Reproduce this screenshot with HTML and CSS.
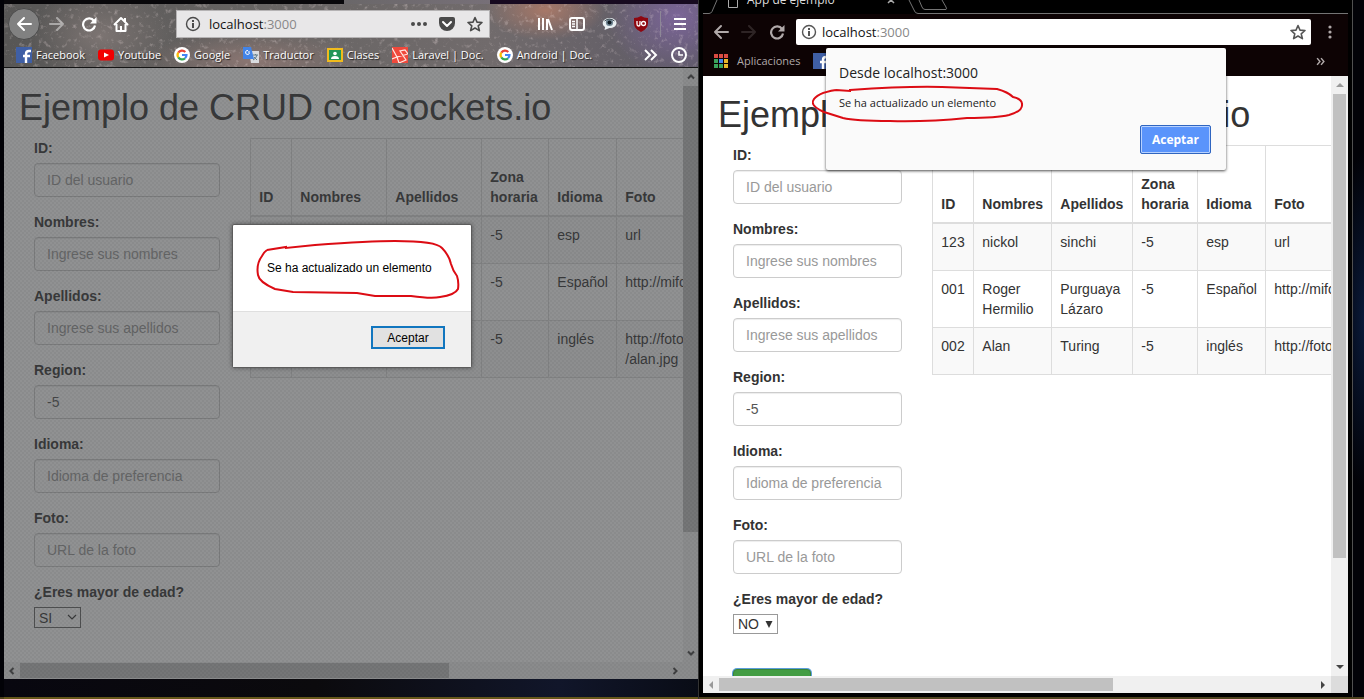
FILE: index.html
```html
<!DOCTYPE html>
<html lang="es">
<head>
<meta charset="utf-8">
<title>App de ejemplo</title>
<link rel="stylesheet" href="styles.css">
</head>
<body>
<svg class="defs" aria-hidden="true">
  <symbol id="back" viewBox="0 0 16 16"><path d="M15 8H2M8 2L2 8l6 6" fill="none" stroke="currentColor" stroke-width="2" stroke-linecap="round" stroke-linejoin="round"/></symbol>
  <symbol id="forward" viewBox="0 0 16 16"><path d="M1 8h13M8 2l6 6-6 6" fill="none" stroke="currentColor" stroke-width="2" stroke-linecap="round" stroke-linejoin="round"/></symbol>
  <symbol id="reload" viewBox="0 0 16 16"><path d="M13 5a6 6 0 1 0 1 4.500" fill="none" stroke="currentColor" stroke-width="2.200"/><path d="M15.500 1v6.500H9z" fill="currentColor"/></symbol>
  <symbol id="info" viewBox="0 0 16 16"><circle cx="8" cy="8" r="6.500" fill="none" stroke="currentColor" stroke-width="1.400"/><path d="M7 7h2v5H7zM7 4h2v2H7z" fill="currentColor"/></symbol>
  <symbol id="star" viewBox="0 0 16 16"><path d="M8 1.500l2 4.600 5 .4-3.800 3.300L12.400 14.600 8 12l-4.400 2.600 1.200-4.800L1 6.500l5-.4z" fill="none" stroke="currentColor" stroke-width="1.600" stroke-linejoin="round"/></symbol>
  <symbol id="google" viewBox="0 0 16 16"><circle cx="8" cy="8" r="8" fill="#fff"/><g fill="none" stroke-width="2.200"><path d="M4.300 5.600A4.500 4.500 0 0 1 11.300 4.900" stroke="#ea4335"/><path d="M4.300 5.600a4.500 4.500 0 0 0 0 4.800" stroke="#fbbc05"/><path d="M4.300 10.400a4.500 4.500 0 0 0 6.700.9" stroke="#34a853"/><path d="M8 8h4.500a4.500 4.500 0 0 1-1.500 3.300" stroke="#4285f4"/></g></symbol>
  <symbol id="facebook" viewBox="0 0 16 16"><path d="M0 0h16v16H0z" fill="#3f5fa5"/><path d="M10 16V7q0-3 3-3h2M7 9h7" fill="none" stroke="#fff" stroke-width="2.400"/></symbol>
  <symbol id="chev" viewBox="0 0 8 8"><path d="M1 5.500l3-3 3 3" fill="none" stroke="currentColor" stroke-width="2"/></symbol>
  <symbol id="tri" viewBox="0 0 8 8"><path d="M0 6l4-4 4 4z" fill="currentColor"/></symbol>
</svg>

<main class="desktop">
  <section class="window firefox">
    <div class="ff-top"></div>
    <header class="ff-chrome">
      <svg class="stars" viewBox="0 0 694 63" preserveAspectRatio="none" aria-hidden="true">
        <filter id="dust"><feTurbulence type="fractalNoise" baseFrequency="0.2" numOctaves="4" seed="8"/><feColorMatrix values="0 0 0 0 .9  0 0 0 0 .78  0 0 0 0 .78  2 2 0 0 -2.200"/></filter>
        <rect width="694" height="63" filter="url(#dust)" opacity=".35"/>
      </svg>
      <div class="ff-nav">
        <button class="ff-back" type="button"><svg class="i16"><use href="#back"/></svg></button>
        <button class="ff-btn faded" type="button"><svg class="i16"><use href="#forward"/></svg></button>
        <button class="ff-btn" type="button"><svg class="i16"><use href="#reload"/></svg></button>
        <button class="ff-btn" type="button"><svg class="i16" viewBox="0 0 16 16"><path d="M1 9l7-7 7 7M3.500 8v7h9V8" fill="none" stroke="currentColor" stroke-width="2" stroke-linejoin="round"/><path d="M7 10h2v5H7zM11 2h2v4h-2z" fill="currentColor"/></svg></button>
        <div class="ff-url">
          <svg class="i16"><use href="#info"/></svg>
          <span class="address">localhost<span class="port">:3000</span></span>
          <svg class="i16" viewBox="0 0 16 16"><g fill="currentColor"><circle cx="2" cy="8" r="2"/><circle cx="8" cy="8" r="2"/><circle cx="14" cy="8" r="2"/></g></svg>
          <svg class="i16" viewBox="0 0 16 16"><path d="M2 1h12q2 0 2 2v4a8 8 0 0 1-16 0V3q0-2 2-2z" fill="currentColor"/><path d="M4 6l4 4 4-4" fill="none" stroke="#fff" stroke-width="2" stroke-linecap="round" stroke-linejoin="round"/></svg>
          <svg class="i16"><use href="#star"/></svg>
        </div>
        <div class="ff-tools">
          <svg class="i16" viewBox="0 0 16 16"><path d="M2 2v12M6 2v12M10 3v11M11 3l4 11" fill="none" stroke="currentColor" stroke-width="2"/></svg>
          <svg class="i16" viewBox="0 0 16 16"><rect x="1" y="2" width="14" height="12" rx="2" fill="none" stroke="currentColor" stroke-width="2"/><path d="M8 2v12M3 5.500h3M3 8h3M3 10.500h3" fill="none" stroke="currentColor" stroke-width="1.500"/></svg>
          <svg class="i16" viewBox="0 0 16 16"><path d="M8.500 2c4 0 7 2 7 5s-3 5-7 5l-5 2 .6-3C0 9 1 2 8.500 2z" fill="#e9eff2"/><circle cx="8.500" cy="6.500" r="3.600" fill="#6f8492"/><circle cx="8.500" cy="6.500" r="2" fill="#101c24"/><path d="M3.500 5q5-4 10 0" fill="none" stroke="#3a454c"/></svg>
          <svg class="i16" viewBox="0 0 16 16"><path d="M8 0q3 2 7 2v5q0 6-7 9-7-3-7-9V2q4 0 7-2z" fill="#8e0710"/><path d="M4 5v3q0 2 1.500 2T7 8V5" fill="none" stroke="#fff" stroke-width="1.300"/><circle cx="10.500" cy="7.500" r="2" fill="none" stroke="#fff" stroke-width="1.300"/></svg>
          <span class="divider"></span>
          <svg class="i16" viewBox="0 0 16 16"><path d="M2 3h12M2 8h12M2 13h12" stroke="currentColor" stroke-width="2"/></svg>
        </div>
      </div>
      <nav class="ff-marks">
        <a href="#"><svg class="i16"><use href="#facebook"/></svg>Facebook</a>
        <a href="#"><svg class="i16" viewBox="0 0 16 16"><rect y="2.500" width="16" height="11" rx="3" fill="#f20000"/><path d="M6 5.500v5L11 8z" fill="#fff"/></svg>Youtube</a>
        <a href="#"><svg class="i16"><use href="#google"/></svg>Google</a>
        <a href="#"><svg class="i16" viewBox="0 0 16 16"><path d="M6 4h10v12H8z" fill="#d9dce0"/><path d="M0 0h8l3 12H0z" fill="#4284e8"/><path d="M7 5H5M5 3.500A2 2 0 1 0 6.500 6" fill="none" stroke="#fff"/><path d="M10 8h5M12.500 7v1M14 8q-1 4-4 5M11 10l3 3" fill="none" stroke="#607d8b"/></svg>Traductor</a>
        <a href="#"><svg class="i16" viewBox="0 0 16 16"><path d="M0 1h16v14H0z" fill="#f1bb1d"/><path d="M2 3h12v10H2z" fill="#239657"/><circle cx="8" cy="6.500" r="1.800" fill="#fff"/><path d="M4 12q0-3 4-3t4 3z" fill="#fff"/></svg>Clases</a>
        <a href="#"><svg class="i16" viewBox="0 0 16 16"><path d="M0 0h16v16H0z" fill="#f0483b"/><path d="M0 1l5 9 11-3-3-4-5 1 6 9-7 3-2-6-5 2" fill="none" stroke="#ffe8e2" stroke-width="1.200"/></svg>Laravel | Doc.</a>
        <a href="#"><svg class="i16"><use href="#google"/></svg>Android | Doc.</a>
        <span class="ff-more">
          <svg class="i16" viewBox="0 0 16 16"><path d="M2 3l5 5-5 5M8 3l5 5-5 5" fill="none" stroke="currentColor" stroke-width="2"/></svg>
          <svg class="i16" viewBox="0 0 16 16"><circle cx="8" cy="8" r="7" fill="none" stroke="currentColor" stroke-width="2"/><path d="M8 4v4h4" fill="none" stroke="currentColor" stroke-width="1.600"/></svg>
        </span>
      </nav>
    </header>

    <div class="page">
      <div class="view">
        <h1>Ejemplo de CRUD con sockets.io</h1>
        <div class="row">
          <form class="form">
            <label for="a-id">ID:</label><input id="a-id" type="text" placeholder="ID del usuario">
            <label for="a-nom">Nombres:</label><input id="a-nom" type="text" placeholder="Ingrese sus nombres">
            <label for="a-ape">Apellidos:</label><input id="a-ape" type="text" placeholder="Ingrese sus apellidos">
            <label for="a-reg">Region:</label><input id="a-reg" type="text" value="-5">
            <label for="a-idi">Idioma:</label><input id="a-idi" type="text" placeholder="Idioma de preferencia">
            <label for="a-fot">Foto:</label><input id="a-fot" type="text" placeholder="URL de la foto">
            <label for="a-edad">¿Eres mayor de edad?</label>
            <span class="pick pick-wide"><select id="a-edad"><option>SI</option></select><svg class="pick-arrow" viewBox="0 0 10 10"><path d="M1 3l4 4 4-4" fill="none" stroke="currentColor" stroke-width="1.200"/></svg></span>
          </form>
          <div class="results">
            <table>
              <colgroup><col class="c-id"><col class="c-name"><col class="c-last"><col class="c-zone"><col class="c-lang"><col></colgroup>
              <thead><tr><th>ID</th><th>Nombres</th><th>Apellidos</th><th>Zona horaria</th><th>Idioma</th><th>Foto</th></tr></thead>
              <tbody>
                <tr class="short"><td></td><td></td><td></td><td>-5</td><td>esp</td><td>url</td></tr>
                <tr class="tall"><td></td><td></td><td></td><td>-5</td><td>Español</td><td>http://mifoto</td></tr>
                <tr class="tall"><td></td><td></td><td></td><td>-5</td><td>inglés</td><td>http://fotos<br>/alan.jpg</td></tr>
              </tbody>
            </table>
          </div>
        </div>
      </div>
      <div class="vbar"><svg class="arrow"><use href="#chev"/></svg><span class="thumb"></span><span class="rest"></span><svg class="arrow down"><use href="#chev"/></svg></div>
      <div class="hbar"><svg class="arrow left"><use href="#chev"/></svg><span class="thumb"></span><span class="rest"></span><svg class="arrow right"><use href="#chev"/></svg></div>
      <div class="corner"></div>
      <div class="shade"></div>
      <div class="ff-dialog" role="dialog">
        <p>Se ha actualizado un elemento</p>
        <footer><button type="button">Aceptar</button></footer>
        <svg class="ff-scribble" viewBox="0 0 206 64"><path d="M12 10L31 7V8L60 5Q115 1 140 1Q181 1 187 8Q194 15 196 24Q198 31 202 36Q204 42 203 49Q200 55 185 57Q177 59 156 56L120 56L102 53L38 52L20 49Q4 42 3 35Q1 24 7 16Q9 12 12 10" fill="none" stroke="#dc0c14" stroke-width="2"/></svg>
      </div>
    </div>
    <div class="ff-bottom"></div>
  </section>

  <section class="window chrome">
    <div class="tabs">
      <svg class="tab-lines" viewBox="0 0 646 14" aria-hidden="true"><path d="M0 13.500h6q2 0 3-2L14 0M206 0l5 10q1 3.500 4 3.500H646M216 0l3 7q1 2.500 3 2.500h21q1 0 0-2.500l-4-7" fill="none" stroke="#747474"/></svg>
      <svg class="tab-icon" viewBox="0 0 10 12"><path d="M.5.500h9v11h-9z" fill="none" stroke="#aaa"/></svg>
      <span class="tab-title">App de ejemplo</span>
      <svg class="tab-close" viewBox="0 0 8 8"><path d="M1 1l6 6M7 1L1 7" stroke="#aaa" stroke-width="1.500"/></svg>
    </div>
    <header class="cr-bar">
      <div class="cr-nav">
        <button class="cr-btn" type="button"><svg class="i16"><use href="#back"/></svg></button>
        <button class="cr-btn faded" type="button"><svg class="i16"><use href="#forward"/></svg></button>
        <button class="cr-btn" type="button"><svg class="i16"><use href="#reload"/></svg></button>
        <div class="cr-url"><svg class="i16"><use href="#info"/></svg><span class="address">localhost<span class="port">:3000</span></span><svg class="i16"><use href="#star"/></svg></div>
        <svg class="cr-menu" viewBox="0 0 16 16"><g fill="currentColor"><circle cx="8" cy="3" r="1.600"/><circle cx="8" cy="8" r="1.600"/><circle cx="8" cy="13" r="1.600"/></g></svg>
      </div>
      <nav class="cr-marks">
        <a href="#"><svg class="apps" viewBox="0 0 14 14"><path d="M0 0h4v4H0zM5 0h4v4H5zM10 0h4v4h-4z" fill="#d94b42"/><path d="M0 5h4v4H0zM0 10h4v4H0zM5 10h4v4H5z" fill="#3aa35c"/><path d="M5 5h4v4H5z" fill="#4387ee"/><path d="M10 5h4v4h-4zM10 10h4v4h-4z" fill="#e8b72b"/></svg>Aplicaciones</a>
        <a href="#"><svg class="i16"><use href="#facebook"/></svg></a>
        <svg class="cr-more" viewBox="0 0 8 8"><path d="M1 1l2.500 3L1 7M4.500 1L7 4 4.500 7" fill="none" stroke="currentColor" stroke-width="1.300"/></svg>
      </nav>
    </header>

    <div class="page">
      <div class="view">
        <h1>Ejemplo de CRUD con sockets.io</h1>
        <div class="row">
          <form class="form">
            <label for="b-id">ID:</label><input id="b-id" type="text" placeholder="ID del usuario">
            <label for="b-nom">Nombres:</label><input id="b-nom" type="text" placeholder="Ingrese sus nombres">
            <label for="b-ape">Apellidos:</label><input id="b-ape" type="text" placeholder="Ingrese sus apellidos">
            <label for="b-reg">Region:</label><input id="b-reg" type="text" value="-5">
            <label for="b-idi">Idioma:</label><input id="b-idi" type="text" placeholder="Idioma de preferencia">
            <label for="b-fot">Foto:</label><input id="b-fot" type="text" placeholder="URL de la foto">
            <label for="b-edad">¿Eres mayor de edad?</label>
            <span class="pick"><select id="b-edad"><option>NO</option></select><svg class="pick-arrow" viewBox="0 0 10 10"><path d="M1.500 2h7L5 9z" fill="currentColor"/></svg></span>
            <button class="submit" type="submit"></button>
          </form>
          <div class="results">
            <table>
              <colgroup><col class="c-id"><col class="c-name"><col class="c-last"><col class="c-zone"><col class="c-lang"><col></colgroup>
              <thead><tr><th>ID</th><th>Nombres</th><th>Apellidos</th><th>Zona horaria</th><th>Idioma</th><th>Foto</th></tr></thead>
              <tbody>
                <tr class="short"><td>123</td><td>nickol</td><td>sinchi</td><td>-5</td><td>esp</td><td>url</td></tr>
                <tr class="tall"><td>001</td><td>Roger Hermilio</td><td>Purguaya Lázaro</td><td>-5</td><td>Español</td><td>http://mifoto</td></tr>
                <tr class="short"><td>002</td><td>Alan</td><td>Turing</td><td>-5</td><td>inglés</td><td>http://fotos</td></tr>
              </tbody>
            </table>
          </div>
        </div>
      </div>
      <div class="vbar"><svg class="arrow dim"><use href="#tri"/></svg><span class="thumb"></span><span class="rest"></span><svg class="arrow down"><use href="#tri"/></svg></div>
      <div class="hbar"><svg class="arrow left dim"><use href="#tri"/></svg><span class="thumb"></span><span class="rest"></span><svg class="arrow right"><use href="#tri"/></svg></div>
      <div class="corner"></div>
    </div>
    <div class="cr-dialog" role="dialog">
      <h2>Desde localhost:3000</h2>
      <p>Se ha actualizado un elemento</p>
      <footer><button type="button">Aceptar</button></footer>
      <svg class="cr-scribble" viewBox="0 0 214 40"><path d="M24 6L38 7V6Q95 2 130 3L185 5Q196 8 201 13Q210 15 210 20Q211 27 197 31Q185 34 155 34Q115 38 78 37Q43 37 31 34L12 28Q-1 22 1 17Q4 9 24 6" fill="none" stroke="#dc0c14" stroke-width="2"/></svg>
    </div>
  </section>
</main>
</body>
</html>
```
FILE: styles.css
```css
* { box-sizing: border-box; }

body {
  margin: 0;
  background: #000;
  color: #333;
  font: 14px/20px "Liberation Sans", Arial, sans-serif;
  overflow: hidden;
}

button, input, select { font: inherit; color: inherit; margin: 0; }
button { padding: 0; border: 0; background: none; }
a { color: inherit; text-decoration: none; }
.defs { position: absolute; width: 0; height: 0; }
.i16 { width: 16px; height: 16px; flex: none; display: block; }

.desktop {
  display: grid;
  grid-template: minmax(0, 1fr) / minmax(0, 695fr) minmax(0, 654fr);
  height: 100vh;
  padding: 0 11px 0 4px;
  background:
    radial-gradient(ellipse 26px 170px at 100% 320px, #0a1a3a, transparent) right / 11px 100% no-repeat,
    linear-gradient(to top, #4d421d 2px, transparent 2px),
    #020207;
}

.window { display: flex; flex-direction: column; min-width: 0; position: relative; }
.firefox { border-right: 1px solid #333; }
.chrome {
  margin-bottom: 2px;
  padding: 0 4px 4px 3px;
  background: #000;
  border: solid #505050;
  border-width: 0 1px 0 0;
  border-left: 1px solid #000;
}

/* Firefox toolbar */
.ff-top { height: 4px; background: linear-gradient(to right, #08070a 49%, #6a6769 49%, #777078 70%, #170a20 70%); }
.ff-chrome {
  position: relative;
  height: 64px;
  color: #fff;
  font: 11px/20px "Open Sans", "Noto Sans", sans-serif;
  border-bottom: 1px solid #151515;
  background:
    radial-gradient(ellipse 70px 60px at 97% 20%, #7b6598, transparent),
    radial-gradient(ellipse 60px 30px at 78% 10%, #a77868, transparent),
    radial-gradient(ellipse 70px 50px at 14% 50%, #7c7472, transparent),
    radial-gradient(ellipse 110px 30px at 36% 90%, #8b7672, transparent),
    linear-gradient(to right, #575655, #686564 40%, #716b6c 70%, #5d5965);
}
.stars { position: absolute; inset: 0; width: 100%; height: 100%; }
.ff-nav { position: relative; display: flex; align-items: center; height: 40px; padding: 0 10px 0 4px; }
.ff-back {
  width: 32px; height: 32px; margin-right: 8px;
  display: grid; place-items: center;
  border: 1px solid #4b4b4b; border-radius: 50%; background: #818181; color: #fff;
}
.ff-btn { width: 32px; display: grid; place-items: center; color: #fff; }
.ff-btn:nth-child(2) { width: 18px; margin-right: 7px; }
.faded { opacity: .45; }
.ff-url {
  flex: 1; height: 28px; margin: 0 47px 0 39px; padding: 0 6px 0 8px;
  display: flex; align-items: center; gap: 12px;
  background: #e8e7e8; border: 1px solid #b5b3b4; color: #4a4a4a;
}
.address { flex: 1; color: #111; font: 13px/20px "Open Sans", "Noto Sans", sans-serif; }
.ff-url .address { margin-left: -4px; }
.port { color: #888; }
.ff-tools { display: flex; align-items: center; gap: 16px; }
.divider { width: 1px; height: 26px; margin: 0 -5px; background: #8d8797; }
.ff-marks { position: relative; display: flex; align-items: center; gap: 13px; height: 22px; padding: 0 11px 0 12px; white-space: nowrap; }
.ff-marks a { display: flex; align-items: center; gap: 4px; text-shadow: 1px 1px 1px #222; }
.ff-more { display: flex; gap: 12px; margin-left: auto; }
.ff-bottom { height: 20px; background: linear-gradient(to top, #655719 2px, transparent 2px), linear-gradient(to right, #08070f, #0b0a0d 45%, #11162a 80%, #090c16); }

/* Sample application page */
.page {
  position: relative;
  flex: 1;
  min-height: 0;
  display: grid;
  grid-template: minmax(0, 1fr) 17px / minmax(0, 1fr) 15px;
  background: #fff;
}
.chrome .page { grid-template-columns: minmax(0, 1fr) 17px; }
.view { overflow: hidden; padding: 20px 0 0 15px; }
.chrome .view { padding-top: 19px; }
h1 { margin: 0 0 10px; font-size: 36px; font-weight: 400; line-height: 40px; white-space: nowrap; }
.row { display: flex; margin-right: 15px; }
.form { flex: none; width: 33.33%; padding: 0 15px; }
.form label { display: block; margin-bottom: 5px; font-weight: 700; white-space: nowrap; }
.form input {
  display: block; width: 100%; height: 34px; margin-bottom: 15px; padding: 6px 12px;
  border: 1px solid #ccc; border-radius: 4px; background: #fff; color: #555;
  box-shadow: inset 0 1px 1px rgba(0, 0, 0, .075);
}
.form input::placeholder { color: #999; opacity: 1; }
.pick { position: relative; display: block; width: 45px; height: 20px; }
.pick-wide { width: 47px; height: 21px; }
.pick select { appearance: none; display: block; width: 100%; height: 100%; padding: 0 4px; border: 1px solid #999; border-radius: 0; background: #fff; line-height: 18px; }
.pick-wide select { border-color: #666; }
.pick-arrow { position: absolute; right: 4px; top: 5px; width: 10px; height: 10px; pointer-events: none; }
.submit { display: block; width: 78px; height: 34px; margin-top: 35px; border-radius: 4px; background: #449d44; border: 1px solid #398439; box-shadow: 0 0 0 1px #5b9dd9; }
.results { flex: 1; min-width: 0; margin-left: 15px; }

table { table-layout: fixed; width: 470px; border-collapse: collapse; border: 1px solid #ddd; }
.c-id { width: 41px; }
.c-name, .c-last { width: 95px; }
.c-zone { width: 67px; }
.c-lang { width: 68px; }
.chrome .c-name { width: 78px; }
.chrome .c-last { width: 81px; }
.chrome .c-zone { width: 65px; }
th, td { padding: 8px; border: 1px solid #ddd; text-align: left; vertical-align: top; }
th { height: 77px; vertical-align: bottom; border-bottom-width: 2px; }
tbody tr:nth-child(odd) { background: #f9f9f9; }
.short td { height: 47px; }
.short:first-child td { height: 48px; }
.tall td { height: 57px; }

/* Scroll bars */
.vbar, .hbar { display: flex; align-items: center; background: #f0f0f0; color: #444; }
.vbar { flex-direction: column; }
.arrow { flex: none; width: 8px; height: 8px; margin: 5px 4px; }
.down { transform: rotate(180deg); }
.left { transform: rotate(-90deg); }
.right { transform: rotate(90deg); }
.dim { color: #999; }
.thumb { background: #c1c1c1; }
.vbar .thumb { flex: 448; width: 13px; }
.vbar .rest { flex: 112; }
.hbar .thumb { flex: 428; height: 13px; }
.hbar .rest { flex: 217; }
.firefox .vbar .thumb { width: 15px; }
.firefox .hbar .thumb { height: 15px; }
.chrome .vbar .thumb { flex: 466; }
.chrome .vbar .rest { flex: 100; }
.chrome .hbar .thumb { flex: 393; }
.chrome .hbar .rest { flex: 201; }
.corner { background: #dcdcdc; }
.firefox .corner { background: #f0f0f0; }

.shade {
  position: absolute; inset: 0;
  background:
    repeating-conic-gradient(rgba(0, 0, 0, .04) 0 25%, transparent 0 50%) 0 0 / 4px 4px,
    rgba(60, 62, 64, .57);
}

/* Firefox alert */
.ff-dialog {
  position: absolute; top: 156px; left: calc(50% + 1px); width: 240px;
  transform: translateX(-50%);
  border: 1px solid #5c5c5c; border-radius: 2px; background: #fff; color: #000;
  font-size: 12px; box-shadow: 0 0 4px rgba(0, 0, 0, .4);
}
.ff-dialog p { margin: 0; padding: 33px 0 33px 34px; white-space: nowrap; }
.ff-dialog footer { display: flex; justify-content: flex-end; padding: 14px 26px 18px; background: #f0f0f0; border-top: 1px solid #dfdfdf; }
.ff-dialog button { width: 74px; height: 23px; border: 2px solid #1176bf; background: #e1e1e1; line-height: 16px; }
.ff-scribble { position: absolute; left: 22px; top: 15px; width: 206px; height: 64px; }

/* Chrome toolbar */
.tabs { position: relative; display: flex; align-items: flex-end; height: 14px; padding: 0 0 6px 25px; overflow: hidden; color: #ddd; font: 12px/16px "Open Sans", "Noto Sans", sans-serif; }
.tab-lines { position: absolute; left: 0; top: 0; width: 646px; height: 14px; }
.tab-icon { width: 10px; height: 12px; margin-right: 9px; }
.tab-title { flex: none; width: 140px; }
.tab-close { width: 8px; height: 8px; margin-bottom: 4px; }
.cr-bar { height: 62px; background: #0d0304; color: #b0a9a9; font: 11px/20px "Open Sans", "Noto Sans", sans-serif; }
.cr-nav { display: flex; align-items: center; height: 36px; padding: 0 10px 0 4px; }
.cr-btn { width: 28px; display: grid; place-items: center; }
.cr-nav .faded { opacity: .2; }
.cr-url { flex: 1; height: 26px; margin: 0 11px 0 5px; padding: 0 5px; display: flex; align-items: center; gap: 5px; border-radius: 2px; background: #fff; color: #555; }
.cr-menu { width: 16px; height: 16px; }
.cr-marks { display: flex; align-items: center; gap: 13px; height: 22px; padding: 0 23px 0 11px; }
.cr-marks a { display: flex; align-items: center; gap: 9px; }
.apps { width: 14px; height: 14px; }
.cr-more { width: 9px; height: 9px; margin-left: auto; }

/* Chrome alert */
.cr-dialog {
  position: absolute; top: 48px; left: 50%; width: 400px; height: 122px;
  transform: translateX(-50%);
  display: flex; flex-direction: column; padding: 15px 15px 16px 13px;
  border-radius: 2px; background: #fafafa; color: #222;
  font: 12px/20px "Open Sans", "Noto Sans", sans-serif;
  box-shadow: 0 1px 3px rgba(0, 0, 0, .7);
}
.cr-dialog h2 { margin: 0; font-size: 14px; line-height: 20px; font-weight: 400; }
.cr-dialog p { margin: 10px 0 0; font-size: 11px; }
.cr-dialog footer { display: flex; justify-content: flex-end; margin-top: auto; }
.cr-dialog button { width: 71px; height: 29px; border: 1px solid #2f65c0; border-radius: 2px; background: #5a94fb; color: #fff; font-weight: 700; box-shadow: inset 0 0 0 1px #b8d2ff; }
.cr-scribble { position: absolute; left: -14px; top: 36px; width: 214px; height: 40px; }
```
